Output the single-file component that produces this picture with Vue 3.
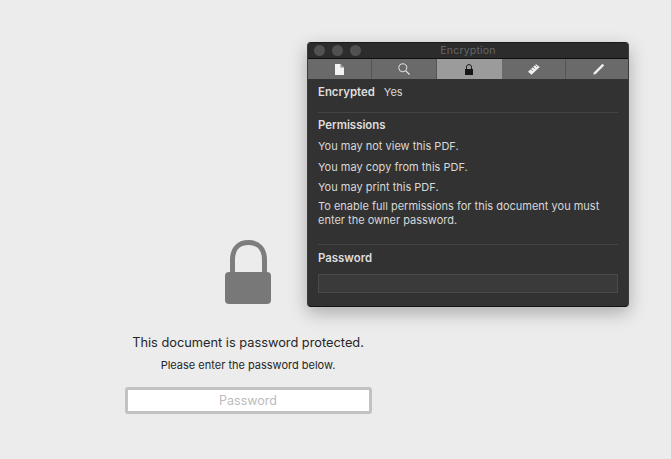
<script setup>
const tabs = ["doc", "search", "lock", "ruler", "pencil"];
const permissions = [
  "You may not view this PDF.",
  "You may copy from this PDF.",
  "You may print this PDF.",
];
</script>

<template>
  <div class="page">
    <div class="prompt">
      <svg class="big-lock" width="46" height="64" viewBox="0 0 46 64">
        <path d="M7.500 33V20C7.500 9 13.500 2.500 23.500 2.500S39.500 9 39.500 20V33" fill="none" stroke="#7d7d7d" stroke-width="5" />
        <rect x="0" y="32" width="46" height="32" rx="4" fill="#787878" />
      </svg>
      <p class="title">This document is password protected.</p>
      <p class="subtitle">Please enter the password below.</p>
      <input class="password" type="text" placeholder="Password" />
    </div>

    <div class="window">
      <div class="titlebar">
        <div class="lights">
          <span></span>
          <span></span>
          <span></span>
        </div>
        <span class="window-title">Encryption</span>
      </div>
      <div class="tabs">
        <div v-for="tab in tabs" :key="tab" class="tab" :class="[tab, { active: tab === 'lock' }]">
          <svg v-if="tab === 'doc'" width="9" height="11" viewBox="0 0 9 11">
            <path d="M0 0H5.500L9 3.500V11H0Z" fill="#f2f2f2" />
            <path d="M5.500 0V3.500H9" fill="#8a8a8a" />
          </svg>
          <svg v-else-if="tab === 'search'" width="12" height="12" viewBox="0 0 12 12">
            <circle cx="4.800" cy="4.800" r="4" fill="none" stroke="#e4e4e4" />
            <path d="M7.800 7.800L11.500 11.500" stroke="#e4e4e4" stroke-width="1.200" />
          </svg>
          <svg v-else-if="tab === 'lock'" width="8" height="11" viewBox="0 0 8 11">
            <path d="M1.500 5.500V3.200C1.500 1.500 2.500 0.600 4 0.600S6.500 1.500 6.500 3.200V5.500" fill="none" stroke="#161616" />
            <rect x="0" y="5" width="8" height="6" fill="#161616" />
          </svg>
          <svg v-else-if="tab === 'ruler'" width="12" height="11" viewBox="0 0 12 11">
            <path d="M0 7.800L8 0.300L11.800 3L3.500 10.800Z" fill="#f0f0f0" />
            <path d="M3 5.200L4.500 6.700M5.200 3.200L6.700 4.700M7.400 1.300L8.900 2.800" stroke="#6b6b6b" />
          </svg>
          <svg v-else width="12" height="12" viewBox="0 0 12 12">
            <path d="M0.300 11.700L1 9.200L9.500 0.800L11.200 2.400L2.800 11Z" fill="#f0f0f0" />
          </svg>
        </div>
      </div>
      <div class="body">
        <div class="encrypted">
          <strong>Encrypted</strong>
          <span>Yes</span>
        </div>
        <hr />
        <h4>Permissions</h4>
        <p v-for="line in permissions" :key="line" class="perm">{{ line }}</p>
        <p class="note">To enable full permissions for this document you must enter the owner password.</p>
        <hr class="second" />
        <h4>Password</h4>
        <input class="owner" type="text" />
      </div>
    </div>
  </div>
</template>

<style>
html,
body {
  margin: 0;
  background: #ececec;
  overflow: hidden;
}
</style>

<style scoped>
.page {
  position: relative;
  width: 671px;
  height: 459px;
  background: #ececec;
  font-family: Inter, "Liberation Sans", sans-serif;
  overflow: hidden;
}

.prompt {
  width: 496px;
  padding-top: 240px;
  display: flex;
  flex-direction: column;
  align-items: center;
}

.big-lock {
  display: block;
}

.title {
  margin: 31px 0 0;
  font-size: 12.800px;
  line-height: 16px;
  color: #262626;
}

.subtitle {
  margin: 7px 0 0;
  font-size: 11px;
  line-height: 14px;
  color: #262626;
}

.password {
  box-sizing: border-box;
  width: 247px;
  height: 27px;
  margin-top: 15px;
  border: 3px solid #c2c2c2;
  border-radius: 3px;
  background: #fff;
  font: 12.500px Inter, "Liberation Sans", sans-serif;
  text-align: center;
  outline: none;
}

.password::placeholder {
  color: #bcbcbc;
  opacity: 1;
}

.window {
  position: absolute;
  left: 307px;
  top: 42px;
  box-sizing: border-box;
  width: 322px;
  height: 265px;
  border: 1px solid #3c3c3c;
  border-top-color: #1a1a1a;
  border-bottom-color: #141414;
  border-radius: 4px;
  background: #323232;
  box-shadow: 0 6px 18px rgba(0, 0, 0, 0.28);
  overflow: hidden;
}

.titlebar {
  position: relative;
  height: 15px;
  background: #2c2c2c;
  border-bottom: 1px solid #0e0e0e;
  display: flex;
  align-items: center;
  justify-content: center;
}

.lights {
  position: absolute;
  left: 6px;
  top: 2px;
  display: flex;
  gap: 7px;
}

.lights span {
  width: 11px;
  height: 11px;
  border-radius: 50%;
  background: #515151;
}

.window-title {
  font-size: 10.500px;
  color: #666;
  letter-spacing: 0.200px;
}

.tabs {
  height: 20px;
  display: grid;
  grid-template-columns: 64px 65px 65px 64px 1fr;
  background: #6a6a6a;
}

.tab {
  display: flex;
  align-items: center;
  justify-content: center;
  border-right: 1px solid #555;
}

.tab:last-child {
  border-right: 0;
}

.tab.active {
  background: #9b9b9b;
  border-right: 0;
}

.tab.doc,
.tab.lock {
  padding-right: 1px;
}

.tab.pencil {
  padding-left: 3px;
}

.body {
  padding: 6px 10px 0;
  color: #d8d8d8;
  font-size: 11px;
  line-height: 14px;
}

.encrypted {
  display: flex;
  gap: 9px;
}

.encrypted strong,
h4 {
  font-weight: 600;
  font-size: 11.400px;
  color: #dedede;
}

hr {
  margin: 13px 0 5px;
  border: 0;
  border-top: 1px solid #444;
}

hr.second {
  margin: 17px 0 6px;
}

h4 {
  margin: 0 0 7px;
  line-height: 14px;
}

.perm {
  margin: 0 0 6.500px;
}

.note {
  margin: -2px 0 0;
}

.owner {
  display: block;
  box-sizing: border-box;
  width: 100%;
  height: 19px;
  margin-top: 9px;
  border: 1px solid #4a4a4a;
  background: #3a3a3a;
  outline: none;
}
</style>
